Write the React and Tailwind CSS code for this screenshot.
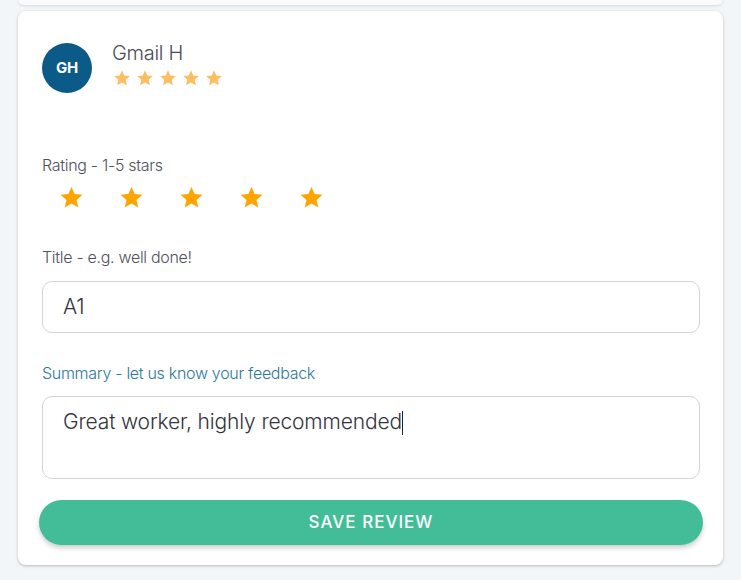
import React from "react";

function Star({ size = 24, color = "#ffa500" }) {
  return (
    <svg width={size} height={size} viewBox="0 0 24 24" aria-hidden="true">
      <path
        d="M12 1.8l3.05 6.9 7.45.7-5.65 4.95 1.7 7.35L12 17.85 5.45 21.7l1.7-7.35L1.5 9.4l7.45-.7z"
        fill={color}
      />
    </svg>
  );
}

export default function App() {
  return (
    <div
      className="min-h-[580px] w-[741px] bg-[#f3f6f9] relative overflow-hidden"
      style={{ fontFamily: "Inter, 'Noto Sans', sans-serif" }}
    >
      <div className="mx-[18px] h-[6px] -mt-[1px] rounded-b-lg bg-[#f8fafb] shadow-[0_1px_3px_rgba(0,0,0,0.12)]" />
      <div className="mx-[18px] mt-[6px] h-[554px] rounded-lg bg-white shadow-[0_1px_3px_rgba(0,0,0,0.25)] px-6 pt-[31px]">
        <div className="flex items-start">
          <div className="w-[50px] h-[50px] rounded-full bg-[#0b5a88] flex items-center justify-center mt-[1px]">
            <span className="text-white font-bold text-[15px] tracking-[-0.2px]">GH</span>
          </div>
          <div className="ml-5 -mt-[1px]">
            <div className="text-[20px] leading-[24px] text-[#4a4a55] font-light tracking-[-0.3px]">Gmail H</div>
            <div className="flex gap-[5px] mt-[4px] ml-[1px]">
              {[0, 1, 2, 3, 4].map((i) => (
                <Star key={i} size={18} color="#fcbd63" />
              ))}
            </div>
          </div>
        </div>

        <div className="mt-[62px] text-[16px] leading-[20px] text-[#50505a] font-light tracking-[-0.3px]">
          Rating - 1-5 stars
        </div>
        <div className="flex gap-[35px] mt-[10px] ml-[17px]">
          {[0, 1, 2, 3, 4].map((i) => (
            <Star key={i} size={25} />
          ))}
        </div>

        <div className="mt-[37px] text-[16px] leading-[20px] text-[#50505a] font-light tracking-[-0.3px]">
          Title - e.g. well done!
        </div>
        <div className="mt-[14px] w-[658px] h-[52px] rounded-[10px] border border-[#d4d4d8] flex items-center px-5">
          <span className="text-[21px] text-[#33333d] font-light tracking-[-0.3px]">A1</span>
        </div>

        <div className="mt-[30px] text-[16px] leading-[20px] text-[#2b7896] font-light tracking-[-0.3px]">
          Summary - let us know your feedback
        </div>
        <div className="mt-[13px] w-[658px] h-[83px] rounded-[10px] border border-[#d4d4d8] px-5 pt-[11px]">
          <span className="text-[21px] leading-[28px] text-[#33333d] font-light tracking-[-0.15px]">
            Great worker, highly recommended
          </span>
          <span className="inline-block w-px h-[24px] bg-[#222] align-middle -mt-[4px]" />
        </div>

        <button className="mt-[21px] -ml-[3px] w-[664px] h-[45px] rounded-full bg-[#43bd97] text-white text-[17px] font-medium tracking-[1px] shadow-[0_3px_5px_rgba(0,0,0,0.2)]">
          SAVE REVIEW
        </button>
      </div>
    </div>
  );
}
